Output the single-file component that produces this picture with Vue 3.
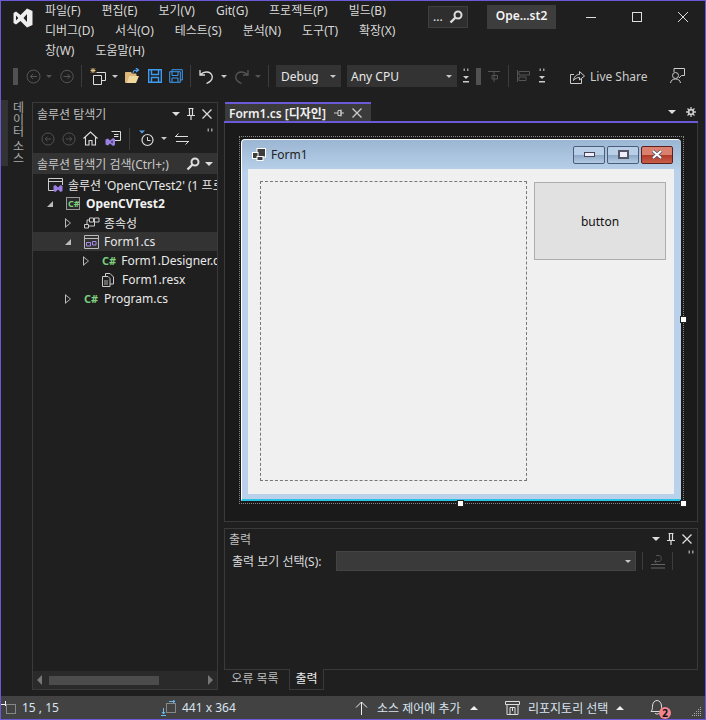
<script setup>
const menu = ['파일(F)', '편집(E)', '보기(V)', 'Git(G)', '프로젝트(P)', '빌드(B)', '디버그(D)', '서식(O)', '테스트(S)', '분석(N)', '도구(T)', '확장(X)', '창(W)', '도움말(H)']
</script>

<template>
  <div class="win">
    <!-- 타이틀 + 메뉴 -->
    <header class="top">
      <svg class="logo" width="20" height="20" viewBox="0 0 20 20"><path fill="#eeeeee" fill-rule="evenodd" d="M14 0.5 19.5 3V17L14 19.5 7.5 13 3 16.5 0.5 15V5L3 3.5 7.5 7ZM14 6 10.5 10 14 14ZM3 7.5V12.5L5.3 10Z"/></svg>
      <nav class="menu">
        <span v-for="m in menu" :key="m">{{ m }}</span>
      </nav>
      <div class="searchbox">
        <span>...</span>
        <svg width="14" height="14" viewBox="0 0 14 14"><circle cx="9" cy="5" r="3.5" fill="none" stroke="#dcdcdc" stroke-width="2"/><path d="M6.5 7.5 1.5 12.5" stroke="#dcdcdc" stroke-width="2.4"/></svg>
      </div>
      <div class="project">Ope...st2</div>
      <div class="winbtns">
        <svg width="12" height="12" viewBox="0 0 12 12"><path d="M1 6.5H11" stroke="#ddd"/></svg>
        <svg width="12" height="12" viewBox="0 0 12 12"><rect x="1.5" y="1.5" width="9" height="9" fill="none" stroke="#ddd"/></svg>
        <svg width="12" height="12" viewBox="0 0 12 12"><path d="M1 1 11 11M11 1 1 11" stroke="#ddd"/></svg>
      </div>
    </header>

    <!-- 툴바 -->
    <div class="toolbar">
      <i class="grip"></i>
      <svg class="ml8" width="15" height="15" viewBox="0 0 15 15"><circle cx="7.5" cy="7.5" r="6.5" fill="none" stroke="#555"/><path d="M11 7.5H4.5M7 5 4.5 7.5 7 10" fill="none" stroke="#555"/></svg>
      <i class="caret dim ml5"></i>
      <svg class="ml8" width="14" height="15" viewBox="0 0 14 15"><circle cx="7" cy="7.5" r="6.2" fill="none" stroke="#555"/><path d="M3.5 7.5H10M7.5 5 10 7.5 7.5 10" fill="none" stroke="#555"/></svg>
      <i class="sep ml7"></i>
      <svg class="ml8" width="17" height="18" viewBox="0 0 17 18"><path d="M3 1V6M0.5 3.5H5.500M1 1.500 5 5.500M5 1.500 1 5.500" stroke="#e8c77e"/><path d="M6.500 5.500H15.500V13.500H11.500M3.500 8.500H11.500V17.500H3.500Z" fill="none" stroke="#ddd"/></svg>
      <i class="caret ml5"></i>
      <svg class="ml7" width="15" height="16" viewBox="0 0 15 16"><path d="M0.500 4.500H6L7 6H11V8H4L1.500 14.500H0.500Z" fill="#dcb67a" stroke="#dcb67a"/><path d="M1.500 15H11L14 8H4Z" fill="#f0d79c"/><path d="M8 5 C8 2.500 10 2 13 2M11 0 13.500 2 11 4" fill="none" stroke="#4fa3ee" stroke-width="1.200"/></svg>
      <svg class="ml8" width="14" height="14" viewBox="0 0 14 14"><path d="M0.700 0.700H13.300V13.300H0.700ZM3.500 1V5.500H10.500V1M3.500 13V8.500H10.500V13" fill="none" stroke="#3f9bf0" stroke-width="1.400"/></svg>
      <svg class="ml7" width="14" height="14" viewBox="0 0 14 14"><path d="M3 2.500V0.700H13.300V11H11.500M0.700 2.700H11.300V13.300H0.700ZM3 3V6.500H9V3M3 13V9H9V13" fill="none" stroke="#3f9bf0"/></svg>
      <i class="sep ml7"></i>
      <svg class="ml8" width="15" height="15" viewBox="0 0 15 15"><path d="M1 1V6H6M1.500 5.500C5 2 11 2 13 6.500 14 10 11 13 7.500 14.500" fill="none" stroke="#dcdcdc" stroke-width="1.300"/></svg>
      <i class="caret ml7"></i>
      <svg class="ml8" width="14" height="15" viewBox="0 0 14 15"><path d="M13 1V6H8M12.500 5.500C9 2 3 2 1 6.500 0 10 3 13 6.500 14.500" fill="none" stroke="#555" stroke-width="1.300"/></svg>
      <i class="caret dim ml6"></i>
      <i class="sep ml7"></i>
      <div class="combo debug ml7"><span>Debug</span><i class="caret"></i></div>
      <div class="combo cpu ml6"><span>Any CPU</span><i class="caret"></i></div>
      <svg class="ml6" width="6" height="18" viewBox="0 0 6 18"><path d="M0.500 1.500H2V4H0.500ZM4 1.500H5.500V4H4Z" fill="#999"/><path d="M0 9H6L3 12Z M0 14H6V15.500H0Z" fill="#ccc"/></svg>
      <i class="grip ml7"></i>
      <svg class="ml7" width="12" height="14" viewBox="0 0 12 14"><path d="M0 2.500H12M6 2.500V13M4 6.500H9.500V10H4Z" fill="none" stroke="#555"/></svg>
      <i class="sep ml8"></i>
      <svg class="ml8" width="13" height="14" viewBox="0 0 13 14"><path d="M0.500 1V13M2 2.500H12.500V6H2ZM2 8H9V11.500H2Z" fill="none" stroke="#555"/></svg>
      <svg class="ml9" width="6" height="18" viewBox="0 0 6 18"><path d="M0.500 1.500H2V4H0.500ZM4 1.500H5.500V4H4Z" fill="#999"/><path d="M0 9H6L3 12Z M0 14H6V15.500H0Z" fill="#ccc"/></svg>
      <svg class="ls" width="15" height="15" viewBox="0 0 15 15"><path d="M4 5.500H0.500V14.500H11.500V10" fill="none" stroke="#ccc"/><path d="M3.500 11.500C4 7.500 6.500 5.500 9.500 5.500V2.500L14.500 7 9.500 11V8.500C7 8.500 5 9.500 3.500 11.500Z" fill="none" stroke="#ccc"/></svg>
      <span class="lstext">Live Share</span>
      <svg class="fb" width="15" height="16" viewBox="0 0 15 16"><path d="M4 4V0.500H14.500V7.500H11.500L9 10" fill="none" stroke="#ccc"/><circle cx="5.500" cy="7.500" r="3" fill="none" stroke="#ccc"/><path d="M0.500 15C1 12 3 11 5.500 11S10 12 10.500 15" fill="none" stroke="#ccc"/></svg>
    </div>

    <main class="main">
      <aside class="rail">
        <div class="railstrip"></div>
        <div class="railtext">데이터 소스</div>
      </aside>

      <!-- 솔루션 탐색기 -->
      <section class="explorer">
        <div class="phead">
          <span class="ptitle">솔루션 탐색기</span>
          <i class="caret white"></i>
          <svg width="10" height="12" viewBox="0 0 10 12"><path d="M2.500 0.500H7.500M3.500 1V7M6.500 1V7M1 7.500H9M5 8V12" fill="none" stroke="#ddd" stroke-width="1.200"/></svg>
          <svg width="10" height="10" viewBox="0 0 10 10"><path d="M0.500 0.500 9.500 9.500M9.500 0.500 0.500 9.500" stroke="#ddd" stroke-width="1.300"/></svg>
        </div>
        <div class="ptools">
          <svg width="14" height="14" viewBox="0 0 15 15"><circle cx="7.500" cy="7.500" r="6.500" fill="none" stroke="#555"/><path d="M11 7.500H4.500M7 5 4.500 7.500 7 10" fill="none" stroke="#555"/></svg>
          <svg width="14" height="14" viewBox="0 0 15 15"><circle cx="7.500" cy="7.500" r="6.500" fill="none" stroke="#555"/><path d="M4 7.500H10.500M8 5 10.500 7.500 8 10" fill="none" stroke="#555"/></svg>
          <svg width="15" height="15" viewBox="0 0 15 15"><path d="M0.500 7.500 7.500 1 14.500 7.500M2.500 6V14H6V9.500H9V14H12.500V6" fill="none" stroke="#ddd" stroke-width="1.100"/></svg>
          <svg width="16" height="16" viewBox="0 0 16 16"><path d="M6.500 0.500H15.500V9.500H9" fill="none" stroke="#ddd"/><path d="M9 3.500H13.500M9 5.500H13.500" stroke="#ddd"/><path d="M0.500 8.500 3 7.500 5 9.500 8 7 10 8V14L8 15 5 12.500 3 14.500 0.500 13.500Z" fill="#9a7fe0"/><path d="M7.500 9.500V12.500L6 11Z" fill="#1f1f1f"/></svg>
          <i class="sep toolsep"></i>
          <svg class="hist" width="17" height="17" viewBox="0 0 17 17"><path d="M0 0.500H6L3 3.500Z" fill="#4fa3ee"/><circle cx="8.500" cy="10" r="5.500" fill="none" stroke="#ddd" stroke-width="1.200"/><path d="M8.500 7V10.500H11.500" fill="none" stroke="#ddd"/></svg>
          <i class="caret hc"></i>
          <svg class="sync" width="14" height="12" viewBox="0 0 14 12"><path d="M0 3.500H13M3.500 0.500 0.500 3.500M14 8.500H1M10.500 11.500 13.500 8.500" fill="none" stroke="#ddd"/></svg>
          <svg class="over" width="6" height="4" viewBox="0 0 6 4"><path d="M0.500 0.500H2V3.500H0.500ZM4 0.500H5.500V3.500H4Z" fill="#999"/></svg>
        </div>
        <div class="psearch">
          <span>솔루션 탐색기 검색(Ctrl+;)</span>
          <svg width="14" height="14" viewBox="0 0 14 14"><circle cx="9" cy="5" r="3.500" fill="none" stroke="#dcdcdc" stroke-width="2"/><path d="M6.500 7.500 1.500 12.500" stroke="#dcdcdc" stroke-width="2.400"/></svg>
          <i class="caret white"></i>
        </div>
        <ul class="tree">
          <li class="row">
            <i class="slot short"></i>
            <svg class="ico" width="15" height="14" viewBox="0 0 15 14"><path d="M8 12.500H0.500V0.500H14.500V7M0.500 3.500H14.500" fill="none" stroke="#ccc"/><path d="M5.500 8 7.500 7 10 9.500 12.500 7 14.500 8V13L12.500 14 10 11.500 7.500 14 5.500 13Z" fill="#9a7fe0"/></svg>
            <span>솔루션 'OpenCVTest2' (1 프로젝트)</span>
          </li>
          <li class="row l1">
            <i class="slot"><b class="open"></b></i>
            <svg class="ico" width="14" height="13" viewBox="0 0 14 13"><rect x="0.500" y="0.500" width="13" height="12" fill="#2a2a2a" stroke="#9a9a9a"/><text x="2" y="10" class="cs small">C#</text></svg>
            <span class="bold">OpenCVTest2</span>
          </li>
          <li class="row l2">
            <i class="slot"><b class="closed"></b></i>
            <svg class="ico" width="16" height="12" viewBox="0 0 16 12"><path d="M0.500 7.500H4.500V11H0.500ZM5.500 1H9.500V5H5.500ZM10.500 1H15V5H10.500ZM3 7.500V3H5.500M4.500 9H10.500V5" fill="none" stroke="#ccc"/></svg>
            <span>종속성</span>
          </li>
          <li class="row l2 hl">
            <i class="slot"><b class="open"></b></i>
            <svg class="ico" width="15" height="14" viewBox="0 0 15 14"><path d="M0.500 0.500H14.500V13.500H0.500ZM0.500 3.500H14.500" fill="none" stroke="#bbb"/><path d="M2.500 7.500H6.500V11H2.500ZM8.500 6.500H12V10H8.500Z" fill="none" stroke="#a58be8"/></svg>
            <span>Form1.cs</span>
          </li>
          <li class="row l3">
            <i class="slot"><b class="closed"></b></i>
            <span class="ico cs">C#</span>
            <span>Form1.Designer.cs</span>
          </li>
          <li class="row l3">
            <i class="slot"></i>
            <svg class="ico" width="12" height="14" viewBox="0 0 12 14"><path d="M3.500 3V0.500H8L11.500 4V11H8M0.500 3.500H6L8 5.500V13.500H0.500Z" fill="none" stroke="#ccc"/><path d="M2 7H6V12H2Z" fill="#666"/></svg>
            <span>Form1.resx</span>
          </li>
          <li class="row l2">
            <i class="slot"><b class="closed"></b></i>
            <span class="ico cs">C#</span>
            <span>Program.cs</span>
          </li>
        </ul>
        <div class="hscroll">
          <i class="al"></i>
          <div class="htrack"><div class="hthumb"></div></div>
          <i class="ar"></i>
        </div>
      </section>

      <div class="right">
        <div class="doctabs">
          <div class="doctab">
            <span>Form1.cs [디자인]</span>
            <svg width="10" height="10" viewBox="0 0 10 10"><path d="M0 5H4M4 2.500H7V7.500H4ZM7 1.500V8.500" fill="none" stroke="#ccc"/><path d="M7 5H10" stroke="#ccc"/></svg>
            <svg width="10" height="10" viewBox="0 0 10 10"><path d="M0.500 0.500 9.500 9.500M9.500 0.500 0.500 9.500" stroke="#ccc" stroke-width="1.300"/></svg>
          </div>
          <div class="docright">
            <i class="caret white"></i>
            <svg width="10" height="10" viewBox="0 0 10 10"><circle cx="5" cy="5" r="2.200" fill="none" stroke="#ccc" stroke-width="2"/><path d="M5 0V10M0 5H10M1.500 1.500 8.500 8.500M8.500 1.500 1.500 8.500" stroke="#ccc" stroke-width="1.300"/><circle cx="5" cy="5" r="1.500" fill="#1f1f1f"/></svg>
          </div>
        </div>
        <div class="designer">
          <div class="selection">
            <div class="form">
              <div class="caption">
                <svg width="14" height="13" viewBox="0 0 14 13"><rect x="5" y="0.500" width="8.500" height="8.500" fill="#3c3c3c" stroke="#fff"/><rect x="0.500" y="4.500" width="5.500" height="6" fill="#3c3c3c" stroke="#fff"/><rect x="5" y="8.500" width="6" height="4" fill="#3c3c3c" stroke="#fff"/></svg>
                <span class="ftitle">Form1</span>
                <div class="capbtns">
                  <div class="cb"><i class="bmin"></i></div>
                  <div class="cb"><i class="bmax"></i></div>
                  <div class="cb close">
                    <svg width="12" height="9" viewBox="0 0 12 9"><path d="M2 1 10 8M10 1 2 8" stroke="#44506a" stroke-width="3.400"/><path d="M2 1 10 8M10 1 2 8" stroke="#fff" stroke-width="2"/></svg>
                  </div>
                </div>
              </div>
              <div class="client">
                <div class="panel1"></div>
                <div class="button1">button</div>
              </div>
            </div>
            <i class="handle h-r"></i>
            <i class="handle h-b"></i>
            <i class="handle h-c"></i>
          </div>
        </div>

        <section class="output">
          <div class="ohead">
            <span class="ptitle">출력</span>
            <i class="caret white"></i>
            <svg width="10" height="12" viewBox="0 0 10 12"><path d="M2.500 0.500H7.500M3.500 1V7M6.500 1V7M1 7.500H9M5 8V12" fill="none" stroke="#ddd" stroke-width="1.200"/></svg>
            <svg width="10" height="10" viewBox="0 0 10 10"><path d="M0.500 0.500 9.500 9.500M9.500 0.500 0.500 9.500" stroke="#ddd" stroke-width="1.300"/></svg>
          </div>
          <div class="otools">
            <label>출력 보기 선택(S):</label>
            <div class="ocombo"><i class="caret"></i></div>
            <i class="sep osep"></i>
            <svg class="owrap" width="14" height="15" viewBox="0 0 14 15"><path d="M0 10.500H14M0 14H14" stroke="#666"/><path d="M5 1.500H8C11 1.500 11 7.500 8 7.500H3.500M5.500 5.500 3.500 7.500 5.500 9.500" fill="none" stroke="#555"/></svg>
            <i class="sep osep2"></i>
            <svg class="over2" width="6" height="4" viewBox="0 0 6 4"><path d="M0.500 0.500H2V3.500H0.500ZM4 0.500H5.500V3.500H4Z" fill="#999"/></svg>
          </div>
        </section>
        <div class="otabs">
          <span class="otab">오류 목록</span>
          <span class="otab active">출력</span>
        </div>
      </div>
    </main>

    <footer class="status">
      <div class="cell c1">
        <svg width="16" height="14" viewBox="0 0 16 14"><path d="M0 3.500H4M4.500 0V5" stroke="#eee"/><rect x="5.500" y="3.500" width="9" height="9" fill="none" stroke="#ccc" stroke-dasharray="1 1"/></svg>
        <span>15 , 15</span>
      </div>
      <div class="cell c2">
        <svg width="16" height="16" viewBox="0 0 16 16"><rect x="5.500" y="3.500" width="9" height="9" fill="none" stroke="#ccc" stroke-dasharray="1 1"/><path d="M8 1.500H14M12 0 14 1.500 12 3M2.500 8V14M1 12 2.500 14 4 12M0 15.500H5" fill="none" stroke="#6cb8f0"/></svg>
        <span>441 x 364</span>
      </div>
      <div class="cell c3">
        <svg width="13" height="14" viewBox="0 0 13 14"><path d="M6.500 14V1M1 6.500 6.500 1 12 6.500" fill="none" stroke="#eee"/></svg>
        <span>소스 제어에 추가</span>
        <i class="up"></i>
      </div>
      <div class="cell c4">
        <svg width="15" height="14" viewBox="0 0 15 14"><path d="M0.500 0.500H14.500V3.500H0.500ZM2 3.500V13.500H13V3.500M5 13V6.500H10V13M7.500 6.500V10" fill="none" stroke="#ddd"/></svg>
        <span>리포지토리 선택</span>
        <i class="up"></i>
      </div>
      <div class="cell c5">
        <div class="bell">
          <svg width="14" height="15" viewBox="0 0 14 15"><path d="M1 11.500C2.500 10 2.500 8 2.500 6 2.500 3 4.500 0.500 7 0.500S11.500 3 11.500 6C11.500 8 11.500 10 13 11.500ZM5 13C5.500 14.500 8.500 14.500 9 13" fill="none" stroke="#ddd"/></svg>
          <b class="badge">2</b>
        </div>
        <svg class="sizegrip" width="10" height="10" viewBox="0 0 10 10"><path d="M8 0h1v1H8zM6 2h1v1H6zM8 2h1v1H8zM4 4h1v1H4zM6 4h1v1H6zM8 4h1v1H8zM2 6h1v1H2zM4 6h1v1H4zM6 6h1v1H6zM8 6h1v1H8zM0 8h1v1H0zM2 8h1v1H2zM4 8h1v1H4zM6 8h1v1H6zM8 8h1v1H8z" fill="#aaa"/></svg>
      </div>
    </footer>
  </div>
</template>

<style scoped>
* { box-sizing: border-box; }
.win {
  width: 706px;
  height: 720px;
  border: 1px solid #6a5ad8;
  background: #1f1f1f;
  color: #e4e4e4;
  font: 12px "Noto Sans", "Noto Sans CJK KR", sans-serif;
  display: flex;
  flex-direction: column;
  overflow: hidden;
}
i { display: block; flex: none; font-style: normal; }
svg { display: block; flex: none; }

.top { height: 61px; display: flex; align-items: flex-start; position: relative; }
.logo { margin: 7px 0 0 12px; }
.menu {
  margin-left: 12px;
  width: 383px;
  display: flex;
  flex-wrap: wrap;
  column-gap: 21px;
  line-height: 20px;
  align-content: flex-start;
  color: #d8d8d8;
}
.searchbox {
  margin-top: 5px;
  width: 40px;
  height: 22px;
  background: #2e2e2e;
  border: 1px solid #3f3f3f;
  display: flex;
  align-items: center;
  padding-left: 4px;
  gap: 6px;
  line-height: 14px;
}
.project {
  margin: 4px 0 0 19px;
  width: 69px;
  height: 24px;
  background: #3d3d3d;
  color: #f4f4f4;
  font-weight: 600;
  text-align: center;
  line-height: 22px;
}
.winbtns { margin: 10px 0 0 29px; display: flex; gap: 34px; }

.toolbar { height: 30px; display: flex; align-items: center; padding: 0 20px 2px 12px; }
.grip {
  width: 5px;
  height: 17px;
  background-image: radial-gradient(circle at 1px 1px, #555 0.7px, transparent 0.8px);
  background-size: 2px 2px;
}
.caret { width: 0; height: 0; border: 3px solid transparent; border-top: 3px solid #c8c8c8; border-bottom: 0; }
.caret.dim { border-top-color: #555; }
.caret.white { border-width: 4px; border-bottom: 0; border-top-color: #ddd; }
.sep { width: 1px; height: 22px; background: #3c3c3c; }
.ml5 { margin-left: 5px; }
.ml6 { margin-left: 6px; }
.ml7 { margin-left: 7px; }
.ml8 { margin-left: 8px; }
.ml9 { margin-left: 9px; }
.combo {
  height: 22px;
  background: #333;
  display: flex;
  align-items: center;
  justify-content: space-between;
  padding: 0 5px;
  color: #e8e8e8;
}
.combo.debug { width: 65px; }
.combo.cpu { width: 110px; padding-left: 4px; }
.ls { margin-left: 25px; }
.lstext { margin-left: 5px; color: #ccc; }
.fb { margin-left: auto; }

.main { flex: 1; display: flex; min-height: 0; padding: 10px 0 6px; }
.rail { width: 31px; flex: none; position: relative; margin-top: -2px; }
.railstrip { width: 7px; height: 66px; background: #333; }
.railtext {
  position: absolute;
  left: 9px;
  top: 1px;
  writing-mode: vertical-rl;
  color: #a8a8a8;
  line-height: 14px;
}

.explorer {
  width: 186px;
  flex: none;
  border: 1px solid #3a3a3a;
  display: flex;
  flex-direction: column;
}
.phead { height: 21px; display: flex; align-items: center; padding: 0 5px 0 4px; gap: 6px; flex: none; }
.ptitle { flex: 1; color: #c0c0c0; }
.ptools { height: 29px; display: flex; align-items: center; padding-left: 8px; gap: 7px; position: relative; flex: none; }
.toolsep { margin-left: 1px; margin-right: 2px; }
.hc { margin-left: -2px; }
.sync { margin-left: 1px; }
.over { position: absolute; right: 4px; top: 4px; }
.psearch {
  height: 21px;
  background: #333;
  display: flex;
  align-items: center;
  padding: 0 4px;
  gap: 5px;
  flex: none;
  color: #c8c8c8;
}
.psearch span { flex: 1; white-space: nowrap; }
.tree { list-style: none; margin: 1px 0 0; padding: 0; flex: 1; overflow: hidden; }
.row { height: 19px; display: flex; align-items: center; white-space: nowrap; color: #e8e8e8; overflow: hidden; }
.l1 { padding-left: 11px; }
.l2 { padding-left: 29px; }
.l3 { padding-left: 47px; }
.hl { background: #333; }
.slot { width: 22px; height: 19px; display: flex; align-items: center; justify-content: center; padding-right: 10px; }
.slot.short { width: 15px; padding: 0; }
.open { width: 0; height: 0; border-style: solid; border-width: 0 0 6px 6px; border-color: transparent transparent #bbb transparent; }
.closed { width: 0; height: 0; position: relative; border-style: solid; border-width: 5px 0 5px 6px; border-color: transparent transparent transparent #bbb; }
.closed::after { content: ""; position: absolute; left: -5px; top: -3px; border-style: solid; border-width: 3px 0 3px 4px; border-color: transparent transparent transparent #1f1f1f; }
.ico { margin-right: auto; }
.row .ico { margin-right: 5px; width: 15px; }
.row svg.ico { width: auto; margin-right: 0; }
.row svg.ico + span { margin-left: 5px; }
.row svg.ico[width="14"] + span { margin-left: 6px; }
.row svg.ico[width="16"] + span { margin-left: 4px; }
.row svg.ico[width="12"] + span { margin-left: 8px; }
.cs { color: #7ecf7e; font-weight: 700; font-size: 11px; }
.small { font-size: 9px; fill: #7ecf7e; }
.bold { font-weight: 700; color: #f2f2f2; }
.hscroll { height: 18px; flex: none; background: #2a2a2a; display: flex; align-items: center; padding: 0 4px; }
.al { border-style: solid; border-width: 5px 5px 5px 0; border-color: transparent #777 transparent transparent; }
.ar { border-style: solid; border-width: 5px 0 5px 5px; border-color: transparent transparent transparent #777; }
.htrack { flex: 1; padding-left: 7px; }
.hthumb { width: 110px; height: 9px; background: #4c4c4c; }

.right { width: 475px; flex: none; margin-left: 6px; display: flex; flex-direction: column; }
.doctabs { height: 21px; flex: none; display: flex; border-bottom: 2px solid #6a5ad8; margin-right: 1px; }
.doctab {
  width: 146px;
  margin-left: 1px;
  background: #3b3b3b;
  border-top: 2px solid #6a5ad8;
  display: flex;
  align-items: center;
  padding: 0 4px;
  gap: 8px;
  color: #f0f0f0;
  font-weight: 600;
}
.doctab span { white-space: nowrap; margin-right: 0; }
.docright { margin-left: auto; display: flex; align-items: center; gap: 10px; padding-right: 2px; }
.designer {
  height: 399px;
  flex: none;
  margin-right: 1px;
  background: #1a1a1a;
  border: 1px solid #3a3a3a;
  border-top: 0;
  padding: 13px 0 0 14px;
}
.selection {
  width: 445px;
  height: 368px;
  border: 1px dotted #888;
  padding: 2px 1px;
  position: relative;
}
.form {
  width: 440px;
  height: 362px;
  background: linear-gradient(#9bb6d3, #b9d1ea 32px);
  border-top: 1px solid #fff;
  border-left: 1px solid #fff;
  border-bottom: 2px solid #2cc4e6;
  border-radius: 4px 4px 0 0;
  display: flex;
  flex-direction: column;
}
.caption { height: 29px; flex: none; display: flex; align-items: center; padding: 0 8px 0 10px; gap: 5px; color: #111; }
.ftitle { flex: 1; color: #222; }
.capbtns { display: flex; gap: 2px; }
.cb {
  width: 32px;
  height: 18px;
  border: 1px solid #4a5c78;
  border-radius: 2px;
  background: linear-gradient(#b9cfe8 50%, #8ea9c7 52%, #b4cbe4);
  display: flex;
  align-items: center;
  justify-content: center;
}
.cb.close { background: linear-gradient(#d9806e 50%, #b03a28 52%, #c85f4b); border-color: #5a2020; }
.bmin { width: 11px; height: 5px; background: #eef; border: 1px solid #445; }
.bmax { width: 11px; height: 9px; background: #eef; border: 2px solid #556; }
.client {
  height: 325px;
  margin: 0 7px 0 6px;
  background: #f0f0f0;
  display: flex;
  align-items: flex-start;
  padding: 12px 0 0 12px;
  gap: 7px;
}
.panel1 { width: 267px; height: 300px; border: 1px dashed #777; }
.button1 {
  width: 132px;
  height: 78px;
  margin-top: 1px;
  background: #e1e1e1;
  border: 1px solid #adadad;
  display: flex;
  align-items: center;
  justify-content: center;
  color: #111;
}
.handle { position: absolute; width: 7px; height: 7px; background: #fff; border: 1px solid #222; }
.h-r { right: -4px; top: 179px; }
.h-b { left: 217px; bottom: -4px; }
.h-c { right: -4px; bottom: -4px; }

.output {
  height: 142px;
  flex: none;
  margin: 6px 1px 0 0;
  border: 1px solid #3a3a3a;
  border-bottom: 1px solid #3a3a3a;
}
.ohead { height: 19px; display: flex; align-items: center; padding: 0 5px 0 4px; gap: 6px; }
.otools { height: 28px; display: flex; align-items: center; padding: 0 0 2px 7px; position: relative; color: #dcdcdc; }
.otools label { width: 104px; white-space: nowrap; }
.ocombo {
  width: 300px;
  height: 20px;
  background: #3a3a3a;
  border: 1px solid #444;
  display: flex;
  align-items: center;
  justify-content: flex-end;
  padding-right: 4px;
}
.osep { margin-left: 6px; height: 18px; }
.owrap { margin-left: 8px; }
.osep2 { margin-left: 7px; height: 18px; }
.over2 { position: absolute; right: 3px; top: 2px; }
.otabs { height: 20px; flex: none; display: flex; margin-top: -1px; padding-left: 2px; }
.otab { height: 21px; line-height: 19px; color: #bcbcbc; padding: 0 5px 0 0; width: 63px; text-align: center; }
.otab.active {
  width: 35px;
  padding: 0;
  color: #eee;
  background: #1f1f1f;
  border: 1px solid #3a3a3a;
  border-top: 0;
}

.status {
  height: 23px;
  flex: none;
  background: #424242;
  display: flex;
  align-items: center;
  color: #d8e4f0;
}
.cell { display: flex; align-items: center; height: 100%; }
.c1 { width: 160px; gap: 5px; }
.c2 { width: 193px; gap: 5px; }
.c3 { width: 150px; gap: 9px; padding-left: 1px; }
.c4 { width: 145px; gap: 8px; padding-left: 1px; }
.c5 { flex: 1; padding-left: 1px; justify-content: space-between; padding-right: 3px; }
.c5 .sizegrip { align-self: flex-end; margin-bottom: 2px; }
.up { border-style: solid; border-width: 0 4px 4px; border-color: transparent transparent #eee transparent; }
.bell { position: relative; }
.badge {
  position: absolute;
  right: -7px;
  bottom: -4px;
  width: 12px;
  height: 12px;
  border-radius: 50%;
  background: #f2858f;
  color: #111;
  font-size: 10px;
  line-height: 12px;
  text-align: center;
}
</style>
